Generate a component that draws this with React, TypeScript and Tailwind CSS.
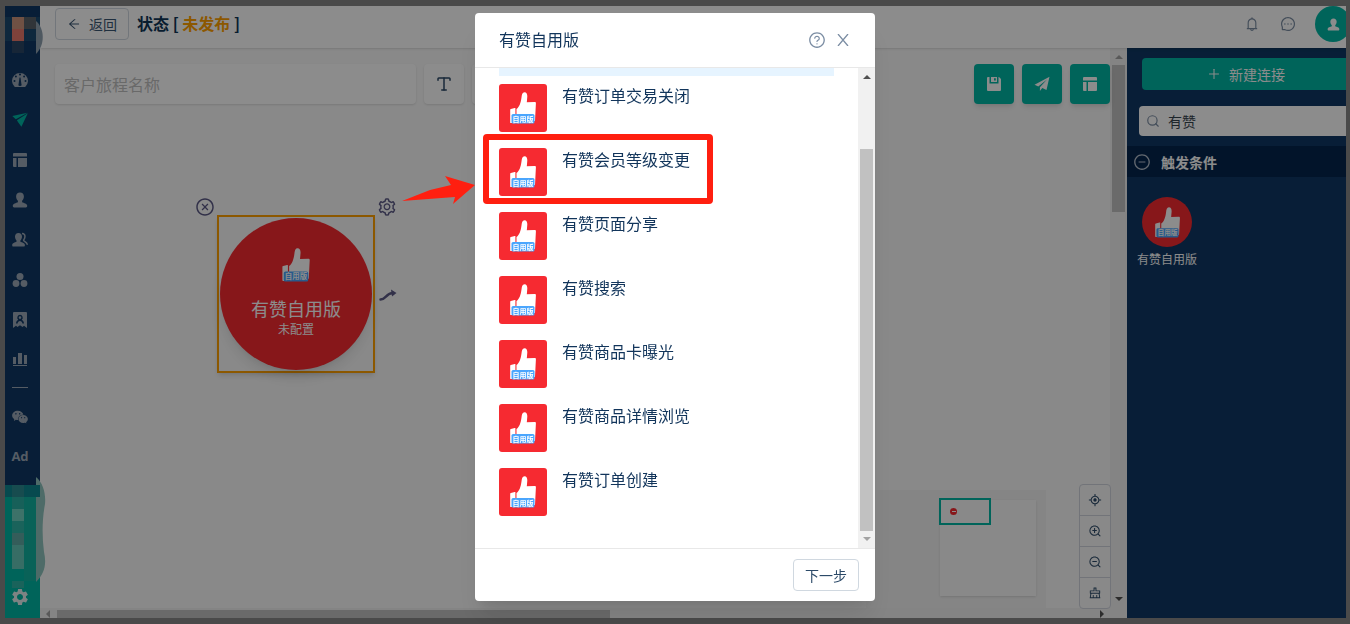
import * as React from "react"

import {
  AiOutlineAim,
  AiOutlineArrowLeft,
  AiOutlineBell,
  AiOutlineClear,
  AiOutlineCloseCircle,
  AiOutlineMessage,
  AiOutlineMinusCircle,
  AiOutlinePlus,
  AiOutlineQuestionCircle,
  AiOutlineSetting,
  AiFillWechat,
  AiOutlineZoomIn,
  AiOutlineZoomOut,
} from "react-icons/ai"
import { MdSettings } from "react-icons/md"
import { Search, Type } from "lucide-react"

const events = [
  "有赞订单交易关闭",
  "有赞会员等级变更",
  "有赞页面分享",
  "有赞搜索",
  "有赞商品卡曝光",
  "有赞商品详情浏览",
  "有赞订单创建",
]

const highlighted = "有赞会员等级变更"

function Svg({ className = "size-4", children }: { className?: string; children: React.ReactNode }) {
  return (
    <svg viewBox="0 0 16 16" fill="currentColor" className={className} aria-hidden="true">
      {children}
    </svg>
  )
}

function GaugeIcon() {
  return (
    <Svg>
      <path
        fillRule="evenodd"
        d="M2.8 15A8 8 0 1 1 13.200 15ZM8 3.600a1.100 1.100 0 1 0 0-2.200 1.100 1.100 0 0 0 0 2.200ZM3.900 5.500a1 1 0 1 0 0-2 1 1 0 0 0 0 2ZM12.100 5.500a1 1 0 1 0 0-2 1 1 0 0 0 0 2ZM2.500 10a1 1 0 1 0 0-2 1 1 0 0 0 0 2ZM13.500 10a1 1 0 1 0 0-2 1 1 0 0 0 0 2ZM7.500 5.500 6.600 12a1.500 1.500 0 1 0 2.800 0L8.500 5.500Z"
      />
    </Svg>
  )
}

function PlaneIcon({ className }: { className?: string }) {
  return (
    <Svg className={className}>
      <path d="M15.500.800.300 3.900l3.500 3.400 8.200-4.500ZM15.800 1.300 4.900 8.200l1.400 2.300 3.100 4.300Z" />
    </Svg>
  )
}

function SendIcon() {
  return (
    <Svg>
      <path d="M15.500.800.500 8.800l3.800 1.600L13 3.500 5.900 11.200V15l2.400-2.900 4.200 1.800Z" />
    </Svg>
  )
}

function LayoutIcon() {
  return (
    <Svg>
      <path d="M2 1h12a1 1 0 0 1 1 1v2.500H1V2a1 1 0 0 1 1-1ZM1 6h3.500v9H2a1 1 0 0 1-1-1ZM6 6h9v8a1 1 0 0 1-1 1H6Z" />
    </Svg>
  )
}

function UserIcon({ className }: { className?: string }) {
  return (
    <Svg className={className}>
      <path d="M8 .500c2.400 0 3.900 1.600 3.900 4 0 1.700-.8 3.300-1.800 4.300v1.400c1.800.9 5.100 1.300 5.100 3.600 0 1-.5 1.700-1.300 1.700H2.100c-.8 0-1.300-.7-1.300-1.700 0-2.300 3.300-2.700 5.100-3.600V8.800c-1-1-1.800-2.600-1.800-4.300 0-2.400 1.500-4 3.900-4Z" />
    </Svg>
  )
}

function UsersIcon() {
  return (
    <Svg>
      <path d="M6.500 1c2.200 0 3.500 1.500 3.500 3.600 0 1.600-.7 3-1.600 3.900v1.200c1.700.8 4.500 1.200 4.500 3.300 0 1-.4 1.500-1 1.500H1.200c-.6 0-1-.5-1-1.500 0-2.100 2.700-2.500 4.300-3.300V8.500C3.700 7.600 3 6.200 3 4.600 3 2.500 4.300 1 6.500 1Z" />
      <path
        d="M10 1.500c2.300 0 3.100 1.600 2.900 3.500-.1 1.500-.7 2.300-1.300 3.100-.2 1.300 3.600 1.900 3.700 4.600"
        fill="none"
        stroke="currentColor"
        strokeWidth="1.500"
      />
    </Svg>
  )
}

function GroupIcon() {
  return (
    <Svg>
      <circle cx="8" cy="4.500" r="3.500" />
      <circle cx="4" cy="11.500" r="3.400" />
      <circle cx="12" cy="11.500" r="3.400" />
    </Svg>
  )
}

function BadgeIcon() {
  return (
    <Svg>
      <path
        fillRule="evenodd"
        d="M2 0h12a1 1 0 0 1 1 1v15l-3-2.300-1.500 1.300L8 13.300 5.500 15 4 13.700 1 16V1a1 1 0 0 1 1-1ZM8 2.800a2.800 2.800 0 0 0-1.800 4.900C4.900 8.400 4.100 9.700 4 11.500h1.600c.2-1.700 1-2.600 2.400-2.600s2.200.9 2.400 2.600H12c-.1-1.800-.9-3.100-2.200-3.800A2.800 2.800 0 0 0 8 2.800Zm0 1.500a1.300 1.300 0 1 1 0 2.600 1.300 1.300 0 0 1 0-2.600Z"
      />
    </Svg>
  )
}

function ChartIcon() {
  return (
    <Svg>
      <path d="M1 5h3v7H1ZM6 1h4v11H6ZM12 3h3v9h-3ZM1 13h14v1H1Z" />
    </Svg>
  )
}

function SaveIcon() {
  return (
    <Svg>
      <path
        fillRule="evenodd"
        d="M1 2a1 1 0 0 1 1-1h1.500v6.500h9V1H13l2 2v11a1 1 0 0 1-1 1H2a1 1 0 0 1-1-1ZM5 1h6v5H5ZM8 2.200v2.300h1.800V2.200Z"
      />
    </Svg>
  )
}

function ThumbIcon({ className }: { className: string }) {
  return (
    <svg viewBox="11 8 26 32" className={className} aria-hidden="true">
      <path
        fill="#fff"
        d="M17.500 25c3-2 4.300-6.500 5-11.500.3-3 .9-5.300 2.900-5.300 2.200 0 3 2 2.900 4.300-.1 2-.4 4-.5 5.800l7.700-.2c1 0 1.500.5 1.400 1.400L36 37H17.500ZM11.200 25.500c0-.8 5.200-1.500 5.200-1.500v15h-4.600c-.4 0-.6-.2-.6-.6Z"
      />
      <rect x="12.500" y="30" width="23" height="9.500" rx="1.500" fill="#4aa5fd" />
      <text
        x="24"
        y="37.500"
        textAnchor="middle"
        fill="#fff"
        className="text-[7px] font-bold"
      >
        自用版
      </text>
    </svg>
  )
}

function Arrow({ dir, className }: { dir: "up" | "down" | "left" | "right"; className: string }) {
  const points = {
    up: "0,6 4,2 8,6",
    down: "0,2 4,6 8,2",
    left: "6,0 2,4 6,8",
    right: "2,0 6,4 2,8",
  }
  return (
    <svg viewBox="0 0 8 8" className={`size-2 shrink-0 ${className}`} fill="currentColor" aria-hidden="true">
      <polygon points={points[dir]} />
    </svg>
  )
}

const navItems = [
  { label: "概览", icon: <GaugeIcon /> },
  { label: "旅程", icon: <PlaneIcon />, active: true },
  { label: "页面", icon: <LayoutIcon /> },
  { label: "客户", icon: <UserIcon /> },
  { label: "群组", icon: <UsersIcon /> },
  { label: "分组", icon: <GroupIcon /> },
  { label: "标签", icon: <BadgeIcon /> },
  { label: "报表", icon: <ChartIcon /> },
]

function Sidebar() {
  return (
    <nav className="relative z-10 flex w-[35px] shrink-0 flex-col bg-[#0f3864] text-[#9ba8b7]">
      <svg className="absolute top-0 left-0 h-14 w-10" viewBox="0 0 40 56" aria-hidden="true">
        <rect x="0" y="11" width="35" height="24" fill="#1a4a70" />
        <path d="M31 15c9 8 9 24 0 33Z" fill="#8fa0b0" />
        <rect x="7" y="11" width="12" height="12" fill="#cc947c" />
        <rect x="19" y="11" width="12" height="12" fill="#5a6268" />
        <rect x="7" y="23" width="12" height="12" fill="#e8786c" />
        <rect x="7" y="35" width="12" height="12" fill="#2a4564" />
      </svg>
      <div className="h-[54px]" />
      {navItems.map((item) => (
        <a
          key={item.label}
          href="#"
          aria-label={item.label}
          className={`flex h-10 items-center justify-center pr-[5px] ${item.active ? "text-[#00b6a4]" : ""}`}
        >
          {item.icon}
        </a>
      ))}
      <div className="flex h-[17px] justify-center pt-[7px] pr-[5px]">
        <hr className="w-4 border-[#9ba8b7]" />
      </div>
      <a href="#" aria-label="微信" className="flex h-10 items-center justify-center pr-[5px]">
        <AiFillWechat className="size-[18px]" />
      </a>
      <a
        href="#"
        className="flex h-10 items-center justify-center pr-[5px] font-['Open_Sans',sans-serif] text-[13px] font-bold"
      >
        Ad
      </a>
      <div className="relative mt-2 flex flex-1 flex-col justify-end bg-[#00b6a4] pb-px text-[#e4efef]">
        <svg className="absolute -top-2 left-0 h-28 w-11" viewBox="0 0 44 112" aria-hidden="true">
          <path d="M31 0c7 6 10 16 9 27-3 16-3 32-1 48 3 13 0 22-8 30Z" fill="#8fc4bd" />
          <rect x="0" y="8" width="35" height="12" fill="#0d8790" />
          <rect x="7" y="8" width="12" height="12" fill="#2b8b90" />
          <rect x="7" y="20" width="12" height="12" fill="#2bb0a2" />
          <rect x="19" y="20" width="12" height="84" fill="#12b2a0" />
          <rect x="7" y="32" width="12" height="12" fill="#70cfbf" />
          <rect x="7" y="44" width="12" height="12" fill="#30b5a6" />
          <rect x="7" y="56" width="12" height="12" fill="#5fa9a5" />
          <rect x="7" y="68" width="12" height="24" fill="#65c6b9" />
          <rect x="7" y="104" width="12" height="7" fill="#30b5a6" />
        </svg>
        <a href="#" aria-label="设置" className="flex h-10 items-center justify-center pr-[5px]">
          <MdSettings className="size-5" />
        </a>
      </div>
    </nav>
  )
}

function TopBar() {
  return (
    <header className="relative z-[5] flex h-[42px] shrink-0 items-center overflow-hidden bg-white pb-1.5 pl-[15px] shadow">
      <button className="flex h-8 items-center gap-2 rounded border border-[#d0d8e0] px-[11px] text-sm text-[#3a5673]">
        <AiOutlineArrowLeft className="size-[14px]" />
        返回
      </button>
      <h1 className="ml-2 pb-0.5 text-base font-bold text-[#0f3557]">
        状态 [ <span className="text-[#ffa000]">未发布</span> ]
      </h1>
      <div className="-mr-[5px] ml-auto flex shrink-0 items-center text-[#7b8da3]">
        <button aria-label="通知" className="mr-5">
          <AiOutlineBell className="size-4" />
        </button>
        <button aria-label="消息" className="mr-[19px]">
          <AiOutlineMessage className="size-4" />
        </button>
        <button
          aria-label="账号"
          className="flex size-9 items-center justify-center rounded-full bg-[#00b6a4] text-white"
        >
          <UserIcon className="size-[13px]" />
        </button>
      </div>
    </header>
  )
}

function JourneyNode() {
  return (
    <div className="absolute top-[167px] left-[177px] border-2 border-[#ffa000] p-px shadow-md">
      <button aria-label="删除" className="absolute -top-5 -left-[24px] text-[#5c5a86]">
        <AiOutlineCloseCircle className="size-5" />
      </button>
      <button aria-label="配置" className="absolute -top-5 -right-[24px] text-[#5c5a86]">
        <AiOutlineSetting className="size-5" />
      </button>
      <svg viewBox="0 0 18 12" className="absolute top-[72px] -right-[24px] h-3 w-[18px]" aria-hidden="true">
        <path d="M1.500 10.500C7 10.500 7 4 14 4" fill="none" stroke="#5c5a86" strokeWidth="2.500" strokeLinecap="round" />
        <path d="M12 .500 17.500 4 13 7.500Z" fill="#5c5a86" />
      </svg>
      <div className="flex size-[152px] flex-col items-center rounded-full bg-[#f62a31] pt-[30px] text-white shadow-lg">
        <ThumbIcon className="h-[34px] w-7" />
        <div className="mt-3 text-lg leading-7">有赞自用版</div>
        <div className="text-xs leading-[14px]">未配置</div>
      </div>
    </div>
  )
}

function Canvas() {
  return (
    <section className="flex min-w-0 flex-1 bg-[#fafafa]">
      <div className="flex min-w-0 flex-1 flex-col">
        <div className="relative min-h-0 flex-1">
          <div className="flex gap-2 pt-4 pl-[15px]">
            <input
              aria-label="客户旅程名称"
              placeholder="客户旅程名称"
              className="h-10 w-[361px] rounded bg-white px-[9px] text-base shadow placeholder:text-[#bfbfbf]"
            />
            <button
              aria-label="文本"
              className="flex size-10 items-center justify-center rounded bg-white text-[#2c4a68] shadow"
            >
              <Type className="size-[18px]" />
            </button>
            <button aria-label="更多" className="size-10 rounded bg-white shadow" />
            <div className="ml-auto flex gap-2 text-white">
              <button aria-label="保存" className="flex size-10 items-center justify-center rounded bg-[#00b6a4] shadow-md">
                <SaveIcon />
              </button>
              <button aria-label="发布" className="flex size-10 items-center justify-center rounded bg-[#00b6a4] shadow-md">
                <SendIcon />
              </button>
              <button aria-label="模板" className="flex size-10 items-center justify-center rounded bg-[#00b6a4] shadow-md">
                <LayoutIcon />
              </button>
            </div>
          </div>

          <JourneyNode />

          <div className="absolute right-16 bottom-0 h-[118px] w-[180px] bg-[#f3f3f3]">
            <div className="absolute top-2.5 right-2.5 size-24 bg-[#fafafa] shadow-sm" />
            <div className="absolute top-2 right-[55px] flex h-[27px] w-[52px] border-2 border-[#00b6a4] pt-2 pl-[9px]">
              <span className="flex size-[7px] items-center justify-center rounded-full bg-[#f62a31]">
                <span className="h-px w-1 bg-white" />
              </span>
            </div>
          </div>

          <div className="absolute -right-px -bottom-px flex w-8 flex-col divide-y divide-[#cfd3dc] rounded border border-[#cfd3dc] bg-[#fafafa] text-[#2c4a68]">
            <button aria-label="定位" className="flex h-[31px] items-center justify-center">
              <AiOutlineAim className="size-[14px]" />
            </button>
            <button aria-label="放大" className="flex h-[31px] items-center justify-center">
              <AiOutlineZoomIn className="size-[14px]" />
            </button>
            <button aria-label="缩小" className="flex h-[31px] items-center justify-center">
              <AiOutlineZoomOut className="size-[14px]" />
            </button>
            <button aria-label="清空" className="flex h-[30px] items-center justify-center">
              <AiOutlineClear className="size-[14px]" />
            </button>
          </div>
        </div>
        <div className="flex h-2.5 items-end bg-[#f1f1f1] pl-1">
          <Arrow dir="left" className="mr-[5px] text-[#a3a3a3]" />
          <div className="h-2 w-[553px] bg-[#c1c1c1]" />
          <Arrow dir="right" className="mr-1 ml-auto text-[#505050]" />
        </div>
      </div>
      <div className="flex w-[17px] shrink-0 flex-col items-center bg-[#f1f1f1] pt-[5px]">
        <Arrow dir="up" className="text-[#a3a3a3]" />
        <div className="mt-1 h-[147px] w-[13px] bg-[#c1c1c1]" />
        <Arrow dir="down" className="mt-auto mb-[15px] text-[#505050]" />
      </div>
    </section>
  )
}

function ConnectPanel() {
  return (
    <aside className="w-[219px] shrink-0 overflow-hidden bg-[#0f3864]">
      <div className="-mr-1 pt-2.5 pl-[15px]">
        <button className="flex h-8 w-full items-center justify-center gap-2 rounded bg-[#00b6a4] text-sm text-white">
          <AiOutlinePlus className="size-[14px]" />
          新建连接
        </button>
      </div>
      <div className="-mr-1 pt-4 pl-3">
        <label className="flex h-[30px] items-center gap-2 rounded bg-white pl-[7px] text-[#7b8da3]">
          <Search className="size-[14px]" aria-label="搜索" />
          <input type="text" defaultValue="有赞" className="w-40 text-sm text-[#38454f] outline-none" />
        </label>
      </div>
      <button className="mt-2.5 flex h-[31px] w-full items-center gap-2.5 bg-[#04254e] pl-1.5 text-sm font-bold text-white">
        <AiOutlineMinusCircle className="size-[18px] text-[#b6c0cd]" />
        触发条件
      </button>
      <div className="mt-5 flex w-20 flex-col items-center">
        <div className="flex size-[50px] items-center justify-center rounded-full bg-[#f62a31]">
          <ThumbIcon className="h-[31px] w-[25px]" />
        </div>
        <div className="mt-1 text-xs text-white">有赞自用版</div>
      </div>
    </aside>
  )
}

function EventDialog() {
  return (
    <div
      role="dialog"
      aria-label="有赞自用版"
      className="relative mt-[13px] mb-[23px] flex w-[400px] flex-col rounded bg-white text-[#12355b] shadow-xl"
    >
      <div className="flex h-[55px] shrink-0 items-center border-b border-[#e8e8e8] pr-[26px] pl-6">
        <h2 className="pb-0.5 text-base">有赞自用版</h2>
        <button aria-label="帮助" className="ml-auto text-[#7b8da3]">
          <AiOutlineQuestionCircle className="size-[18px]" />
        </button>
        <button aria-label="关闭" className="ml-[11px] text-[#7b8da3]">
          <svg viewBox="0 0 12 12" className="size-3" fill="none" stroke="currentColor" strokeWidth="1.300">
            <path d="M1 0 11 12M11 0 1 12" />
          </svg>
        </button>
      </div>

      <div className="flex min-h-0 flex-1">
        <div className="min-w-0 flex-1 pr-6 pl-6">
          <div className="h-2 bg-[#e6f4ff]" />
          <ul className="flex flex-col gap-4 pt-2">
            {events.map((event) => (
              <li key={event} className="relative flex gap-[15px]">
                <div className="flex size-12 shrink-0 justify-center rounded-[3px] bg-[#f62a31] pt-2">
                  <ThumbIcon className="h-8 w-[26px]" />
                </div>
                <div className="text-base leading-[22px]">{event}</div>
                {event === highlighted && (
                  <>
                    <div className="absolute -top-[14px] -left-4 h-[70px] w-[230px] rounded border-6 border-[#ff1f10]" />
                    <svg
                      viewBox="0 0 74 32"
                      className="absolute top-[27px] -left-[97px] h-8 w-[74px]"
                      fill="#ff1f10"
                      aria-hidden="true"
                    >
                      <polygon points="0,26 28,15 49,10 43,1 73,10 51,29 53,22" />
                    </svg>
                  </>
                )}
              </li>
            ))}
          </ul>
        </div>
        <div className="flex w-[17px] shrink-0 flex-col items-center bg-[#f1f1f1] pt-[5px]">
          <Arrow dir="up" className="text-[#505050]" />
          <div className="mt-[68px] mb-1 w-[13px] flex-1 bg-[#c1c1c1]" />
          <Arrow dir="down" className="mb-[5px] text-[#a3a3a3]" />
        </div>
      </div>

      <div className="flex shrink-0 justify-end border-t border-[#e8e8e8] px-4 py-2.5">
        <button className="h-8 rounded border border-[#d0d8e0] px-[11px] text-sm text-[#2c4a68]">下一步</button>
      </div>
    </div>
  )
}

export default function App() {
  return (
    <div className="flex h-screen overflow-hidden border-t-6 border-r-4 border-b-6 border-l-[5px] border-[#888888] font-['Noto_Sans_CJK_SC',sans-serif]">
      <Sidebar />
      <div className="flex min-w-0 flex-1 flex-col">
        <TopBar />
        <div className="flex min-h-0 flex-1">
          <Canvas />
          <ConnectPanel />
        </div>
      </div>
      <div className="fixed inset-0 z-20 flex justify-center bg-black/45">
        <EventDialog />
      </div>
    </div>
  )
}
